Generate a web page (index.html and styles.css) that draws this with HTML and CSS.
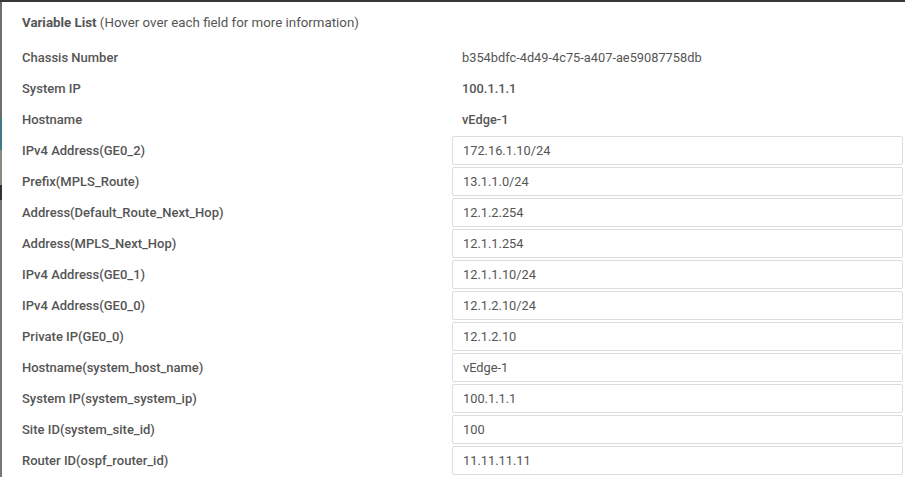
FILE: index.html
```html
<!DOCTYPE html>
<html lang="en">
<head>
    <meta charset="UTF-8">
    <meta name="viewport" content="width=device-width, initial-scale=1.0">
    <title>Variable List</title>
    <link rel="stylesheet" href="styles.css">
</head>
<body>
    <div class="topbar"></div>
    <div class="modal">
        <div class="modal-title"><b>Variable List</b> (Hover over each field for more information)</div>
        <div class="var-list">
            <div class="row">
                <label>Chassis Number</label>
                <div class="value">b354bdfc-4d49-4c75-a407-ae59087758db</div>
            </div>
            <div class="row">
                <label>System IP</label>
                <div class="value strong">100.1.1.1</div>
            </div>
            <div class="row">
                <label>Hostname</label>
                <div class="value strong">vEdge-1</div>
            </div>
            <div class="row">
                <label>IPv4 Address(GE0_2)</label>
                <input type="text" value="172.16.1.10/24">
            </div>
            <div class="row">
                <label>Prefix(MPLS_Route)</label>
                <input type="text" value="13.1.1.0/24">
            </div>
            <div class="row">
                <label>Address(Default_Route_Next_Hop)</label>
                <input type="text" value="12.1.2.254">
            </div>
            <div class="row">
                <label>Address(MPLS_Next_Hop)</label>
                <input type="text" value="12.1.1.254">
            </div>
            <div class="row">
                <label>IPv4 Address(GE0_1)</label>
                <input type="text" value="12.1.1.10/24">
            </div>
            <div class="row">
                <label>IPv4 Address(GE0_0)</label>
                <input type="text" value="12.1.2.10/24">
            </div>
            <div class="row">
                <label>Private IP(GE0_0)</label>
                <input type="text" value="12.1.2.10">
            </div>
            <div class="row">
                <label>Hostname(system_host_name)</label>
                <input type="text" value="vEdge-1">
            </div>
            <div class="row">
                <label>System IP(system_system_ip)</label>
                <input type="text" value="100.1.1.1">
            </div>
            <div class="row">
                <label>Site ID(system_site_id)</label>
                <input type="text" value="100">
            </div>
            <div class="row">
                <label>Router ID(ospf_router_id)</label>
                <input type="text" value="11.11.11.11">
            </div>
        </div>
    </div>
</body>
</html>
```
FILE: styles.css
```css
html, body {
    margin: 0;
    height: 100%;
    overflow: hidden;
}
body {
    font-family: Roboto, "Liberation Sans", Arial, sans-serif;
    color: #555;
    background: linear-gradient(to bottom, #6e6e6e 0, #6e6e6e 118px, #3d7c86 118px, #3d7c86 150px, #8a8a80 150px, #8a8a80 185px, #333 185px, #333 200px, #777 200px);
}
.topbar {
    height: 2px;
    background-color: #383838;
}
.modal {
    margin-left: 2px;
    height: calc(100% - 2px);
    background-color: #fff;
    padding: 12px 2px 0 20px;
    box-sizing: border-box;
}
.modal-title {
    font-size: 13.3px;
    line-height: 18px;
    color: #555;
}
.modal-title b {
    font-weight: 700;
}
.var-list {
    margin-top: 10px;
}
.row {
    display: grid;
    grid-template-columns: 430px 1fr;
    align-items: center;
    height: 31px;
}
.row label {
    font-size: 13px;
    font-weight: 500;
    color: #555;
}
.value {
    font-size: 12.8px;
    padding-left: 10px;
    color: #555;
}
.value.strong {
    font-weight: 500;
}
.row input {
    height: 29px;
    box-sizing: border-box;
    border: 1px solid #ddd;
    border-radius: 2px;
    padding: 0 10px;
    font-family: inherit;
    font-size: 12.8px;
    color: #555;
    outline: none;
}
```
